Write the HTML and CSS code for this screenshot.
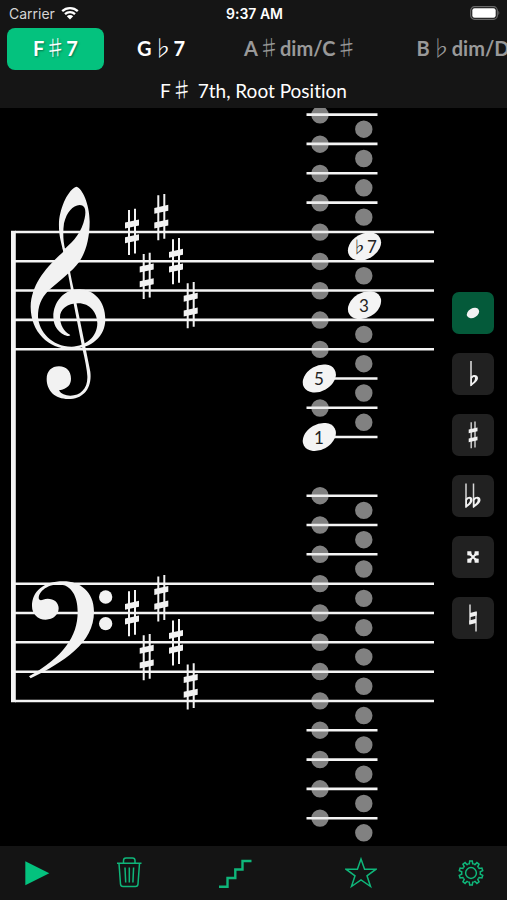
FILE: index.html
```html
<!DOCTYPE html>
<html lang="en">
<head>
<meta charset="utf-8">
<meta name="viewport" content="width=device-width, initial-scale=1">
<title>Chords</title>
<link rel="stylesheet" href="styles.css">
</head>
<body>
<div class="app">
  <header class="header">
    <div class="status">
      <span class="carrier">Carrier
        <svg class="wifi" viewBox="0 0 18 14" aria-hidden="true"><path d="M1.2 5.2a11.3 11.3 0 0 1 15.6 0M4 8.2a7.2 7.2 0 0 1 10 0" fill="none" stroke="#fff" stroke-width="2.3"/><path d="M9 13.4 5.8 10.2a4.6 4.6 0 0 1 6.4 0z" fill="#fff"/></svg>
      </span>
      <span class="time">9:37 AM</span>
      <svg class="battery" viewBox="0 0 30 14" aria-hidden="true"><rect x=".7" y=".7" width="26.6" height="12.6" rx="3.8" fill="none" stroke="#6a6a6a" stroke-width="1.2"/><rect x="2.3" y="2.3" width="23.4" height="9.4" rx="2.2" fill="#fff"/><path d="M28.4 4.8q1.8 2.2 0 4.4z" fill="#6a6a6a"/></svg>
    </div>
    <nav class="chips" aria-label="Chords">
      <button class="chip selected" type="button">F<span class="acc">♯</span>7</button>
      <button class="chip" type="button">G<span class="acc">♭</span>7</button>
      <button class="chip dim" type="button">A<span class="acc">♯</span>dim/C<span class="acc">♯</span></button>
      <button class="chip dim" type="button">B<span class="acc">♭</span>dim/D</button>
    </nav>
    <h1 class="title">F<span class="acc">♯</span> 7th, Root Position</h1>
  </header>

  <main class="main">
    <svg class="score" viewBox="0 108 440 738" role="img" aria-label="Grand staff">
      <defs>
        <g id="sharp">
          <path d="M-3-22V23M3-23.3V21.5" stroke="#f2f2f2" stroke-width="2"/>
          <path d="M-7-9.4 7-12.5V-6.6L-7-3.5zM-7 5.3 7 2.2V8.2L-7 11.3z" fill="#f2f2f2"/>
        </g>
        <ellipse id="head" rx="17.7" ry="12.6" transform="rotate(-30)" fill="#f4f4f4"/>
      </defs>

      <!-- staves -->
      <path class="line" d="M15 232H434M15 261.2H434M15 290.5H434M15 319.9H434M15 349.2H434M15 583.7H434M15 613H434M15 642.3H434M15 671.7H434M15 701H434"/>
      <path d="M11 230.7H15.8V702.3H11z" fill="#f4f4f4"/>

      <!-- ledger lines -->
      <path class="line" d="M306.500 114.600H377.500M306.500 143.900H377.500M306.500 173.200H377.500M306.500 202.600H377.500M320 378.500H377.500M306.500 407.800H377.500M320 437H377.500M306.500 495.700H377.500M306.500 525H377.500M306.500 554.300H377.500M306.500 730.300H377.500M306.500 759.600H377.500M306.500 788.900H377.500M306.500 818.200H377.500"/>

      <!-- one dot per pitch position -->
      <path class="dots" d="M320 114.900V438M320 495.700V819M363.800 129.200V423M363.800 510.400V834"/>

      <!-- treble clef -->
      <g transform="translate(0 180) scale(.3333)" fill="#f2f2f2">
        <path fill-rule="evenodd" d="M230 20C246 24 269 72 269 125C269 180 255 220 238 245C215 276 180 300 147 330C122 355 114 380 114 410C117 455 155 499 215 500C258 499 292 470 292 430C292 398 270 370 235 370C202 370 180 388 180 412C181 434 190 455 211 465Q209 469 202 468C178 461 160 440 160 410C160 368 190 328 237 328C282 328 316 364 316 418C316 468 276 507 212 507C145 507 92 455 92 380C94 315 135 265 190 215C180 175 176 160 177 125C181 80 205 27 230 20zM195 206C222 183 246 155 254 115C259 92 256 75 239 75C218 76 200 97 192 130C188 160 190 185 195 206z"/>
        <path d="M188 205 199 206Q206 260 221 328L256 500 271 575C277 625 250 657 205 657C165 657 140 632 140 597C140 573 155 559 177 559C200 559 213 575 213 596C213 614 203 626 177 631C183 642 196 647 211 647C242 647 264 625 262 588Q260 560 247 505L213 330Q205 280 188 205z"/>
      </g>

      <!-- bass clef -->
      <g transform="translate(0 570) scale(.3333)" fill="#f2f2f2">
        <path d="M87 319C190 260 233 200 233 125C233 80 215 44 175 43C140 44 112 68 117 88C122 94 130 87 143 86C162 86 176 97 176 115C176 134 160 149 137 149C113 149 96 132 96 108C96 65 130 34 190 34C240 34 282 65 282 125C282 220 190 276 92 325z"/>
        <circle cx="317" cy="81" r="20"/><circle cx="317" cy="161" r="20"/>
      </g>

      <!-- key signatures -->
      <use href="#sharp" x="132" y="232"/><use href="#sharp" x="146.7" y="276"/><use href="#sharp" x="161.3" y="217.300"/><use href="#sharp" x="176" y="261.300"/><use href="#sharp" x="190.700" y="305.200"/>
      <use href="#sharp" x="132" y="613.300"/><use href="#sharp" x="146.7" y="657.300"/><use href="#sharp" x="161.3" y="598.400"/><use href="#sharp" x="176" y="642.400"/><use href="#sharp" x="190.700" y="686.500"/>

      <!-- chord tones -->
      <use href="#head" x="364.500" y="246.500"/><use href="#head" x="364.500" y="305.200"/><use href="#head" x="319.300" y="378.500"/><use href="#head" x="319.300" y="437"/>
      <g class="degree">
        <text x="364" y="253"><tspan class="flat">♭</tspan>7</text>
        <text x="364" y="312">3</text>
        <text x="319" y="385">5</text>
        <text x="319" y="444">1</text>
      </g>
    </svg>

    <div class="tools" role="group" aria-label="Accidentals">
      <button class="tool on" type="button" aria-label="Note"><svg viewBox="0 0 42 42"><ellipse cx="21" cy="21" rx="6.600" ry="4.600" transform="rotate(-30 21 21)" fill="#f2f2f2"/></svg></button>
      <button class="tool" type="button" aria-label="Flat"><svg viewBox="0 0 42 42"><path d="M19 8V33" stroke="#d8d8d8" stroke-width="1.600"/><path fill-rule="evenodd" d="M18.600 24C21 21 26 21.500 26 25C26 28 23 30 18.600 33.500zM20 25.500V30C22 28.500 23 27 23 25.200C23 23.200 21 23.600 20 25.500z" fill="#f2f2f2"/></svg></button>
      <button class="tool" type="button" aria-label="Sharp"><svg viewBox="0 0 42 42"><path d="M19.200 8.300V34.300M23 7.500V33.500" stroke="#d8d8d8" stroke-width="1.400"/><path d="M16.700 15.600 25.500 13.600V17.300L16.700 19.300zM16.700 24.400 25.500 22.400V26.200L16.700 28.200z" fill="#f2f2f2"/></svg></button>
      <button class="tool" type="button" aria-label="Double flat"><svg viewBox="0 0 42 42"><path d="M14 8.500V32.500M21.500 8.500V32.500" stroke="#d8d8d8" stroke-width="1.500"/><path fill-rule="evenodd" d="M13.500 24C16 21 20.500 21 20.500 25C20.500 28 18 30 13.500 33zM15 25.500V29.500C17 28 18 26.500 18 25C18 23 16 23.600 15 25.500zM21 24C23.500 21 28.500 21 28.500 25C28.500 28 25.500 30 21 33zM22.500 25.500V29.500C24.500 28 25.600 26.500 25.600 25C25.600 23 23.500 23.600 22.500 25.500z" fill="#f2f2f2"/></svg></button>
      <button class="tool" type="button" aria-label="Double sharp"><svg viewBox="0 0 42 42"><path d="M17 17 25 25M25 17 17 25" stroke="#f2f2f2" stroke-width="2"/><path d="M15.300 15.300H19.300L19.800 19.800 15.300 19.300zM26.700 15.300H22.700L22.200 19.800 26.700 19.300zM15.300 26.700H19.300L19.800 22.200 15.300 22.700zM26.700 26.700H22.700L22.200 22.200 26.700 22.700z" fill="#f2f2f2"/></svg></button>
      <button class="tool" type="button" aria-label="Natural"><svg viewBox="0 0 42 42"><path d="M18 7.500V27M24 15V34.500" stroke="#d8d8d8" stroke-width="1.500"/><path d="M18 16 24.700 14.200V18.500L18 20.300zM17.300 23.500 24 21.700V26L17.300 27.800z" fill="#f2f2f2"/></svg></button>
    </div>
  </main>

  <footer class="toolbar">
    <button type="button" aria-label="Play"><svg viewBox="0 0 32 32"><path d="M4.300 4.200 28.300 16.200 4.300 28.200z" fill="#04c27e"/></svg></button>
    <button type="button" aria-label="Delete"><svg class="stroke" viewBox="0 0 32 32"><path d="M4 6.300H28.500M10.500 6V3.500Q10.500.900 13 .9H19.500Q22 .900 22 3.500V6M6 6.500 7.500 27Q7.700 29.500 10 29.500H22.500Q24.800 29.500 25 27L26.500 6.500M12 10.500 12.700 25.500M16.300 10.500V25.500M20.600 10.500 19.900 25.500"/></svg></button>
    <button type="button" aria-label="Steps"><svg class="stroke steps" viewBox="0 0 32 32"><path d="M0 29.700H8.500V21H16.300V12.500H23.500V4H32.500"/></svg></button>
    <button type="button" aria-label="Favourite"><svg class="stroke" viewBox="0 0 32 32"><path d="M16 2 19.600 12.200H31L22 18.800 25.500 29.500 16 23 6.500 29.500 10 18.800 1 12.200H12.400z"/></svg></button>
    <button type="button" aria-label="Settings"><svg class="stroke" viewBox="0 0 32 32">
      <defs><path id="tooth" d="M-2.870-8.840Q-2.300-9.100-1.700-9.200L-1.300-11.900H1.300L1.700-9.200Q2.300-9.100 2.870-8.840"/></defs>
      <g transform="translate(15 16)"><circle r="5.400"/><use href="#tooth"/><use href="#tooth" transform="rotate(36)"/><use href="#tooth" transform="rotate(72)"/><use href="#tooth" transform="rotate(108)"/><use href="#tooth" transform="rotate(144)"/><use href="#tooth" transform="rotate(180)"/><use href="#tooth" transform="rotate(216)"/><use href="#tooth" transform="rotate(252)"/><use href="#tooth" transform="rotate(288)"/><use href="#tooth" transform="rotate(324)"/></g></svg></button>
  </footer>
</div>
</body>
</html>
```
FILE: styles.css
```css
* { box-sizing: border-box; }

body {
  margin: 0;
  background: #000;
  color: #fff;
  font-family: Lato, sans-serif;
  font-variant-ligatures: none;
}

button {
  border: 0;
  padding: 0;
  background: none;
  color: inherit;
  font: inherit;
}

svg { display: block; }

.app {
  display: flex;
  flex-direction: column;
  min-height: 100vh;
}

.header {
  background: #151515;
  overflow: hidden;
}

.status {
  display: grid;
  grid-template-columns: 1fr auto 1fr;
  align-items: center;
  height: 28px;
  padding: 0 7px 2px 9px;
  font-family: Inter, sans-serif;
  font-size: 14px;
}

.carrier {
  display: flex;
  align-items: center;
  gap: 6px;
  color: #d4d4d4;
}

.wifi { width: 18px; height: 14px; }

.time { font-weight: 600; }

.battery {
  width: 30px;
  height: 14px;
  justify-self: end;
}

.chips {
  display: flex;
  gap: 7px;
  padding: 0 7px;
}

.chip {
  flex: none;
  height: 42px;
  padding: 0 26px 4px;
  border-radius: 8px;
  font-size: 20px;
  font-weight: 700;
  line-height: 24px;
  white-space: nowrap;
}

.selected {
  background: #04c27e;
  text-shadow: 1px 1px 2px rgba(0, 0, 0, .4);
}

.dim { color: #999; }

.acc {
  font-family: "Noto Sans CJK JP", sans-serif;
  font-size: 22px;
  font-weight: 300;
  line-height: 1;
}

.title {
  margin: 0;
  height: 38px;
  line-height: 42px;
  text-align: center;
  font-size: 19px;
  font-weight: 400;
}

.main {
  flex: 1;
  display: grid;
  grid-template-columns: 1fr 67px;
}

.score { width: 100%; }

.line {
  stroke: #f4f4f4;
  stroke-width: 2.600;
}

.dots {
  fill: none;
  stroke: #e6e6e6;
  stroke-width: 17.400;
  stroke-linecap: round;
  stroke-dasharray: 0 29.310;
  stroke-opacity: .56;
}

.degree {
  fill: #222;
  font-size: 17px;
  text-anchor: middle;
}

.flat { font-family: "Noto Sans CJK JP", sans-serif; font-size: 16px; }

.tools {
  display: flex;
  flex-direction: column;
  justify-content: center;
  gap: 19px;
  padding: 0 0 24px 12px;
}

.tool {
  width: 42px;
  height: 42px;
  border-radius: 7px;
  background: #212121;
}

.on { background: #045a3a; }

.toolbar {
  display: grid;
  grid-template-columns: 74fr 110fr 102fr 150fr 71fr;
  height: 54px;
  background: #141414;
}

.toolbar button {
  display: grid;
  place-items: center;
}

.toolbar svg { width: 32px; height: 32px; }

.stroke {
  fill: none;
  stroke: #0fb67a;
  stroke-width: 1.500;
}

.steps { stroke-width: 2.400; overflow: visible; }
```
